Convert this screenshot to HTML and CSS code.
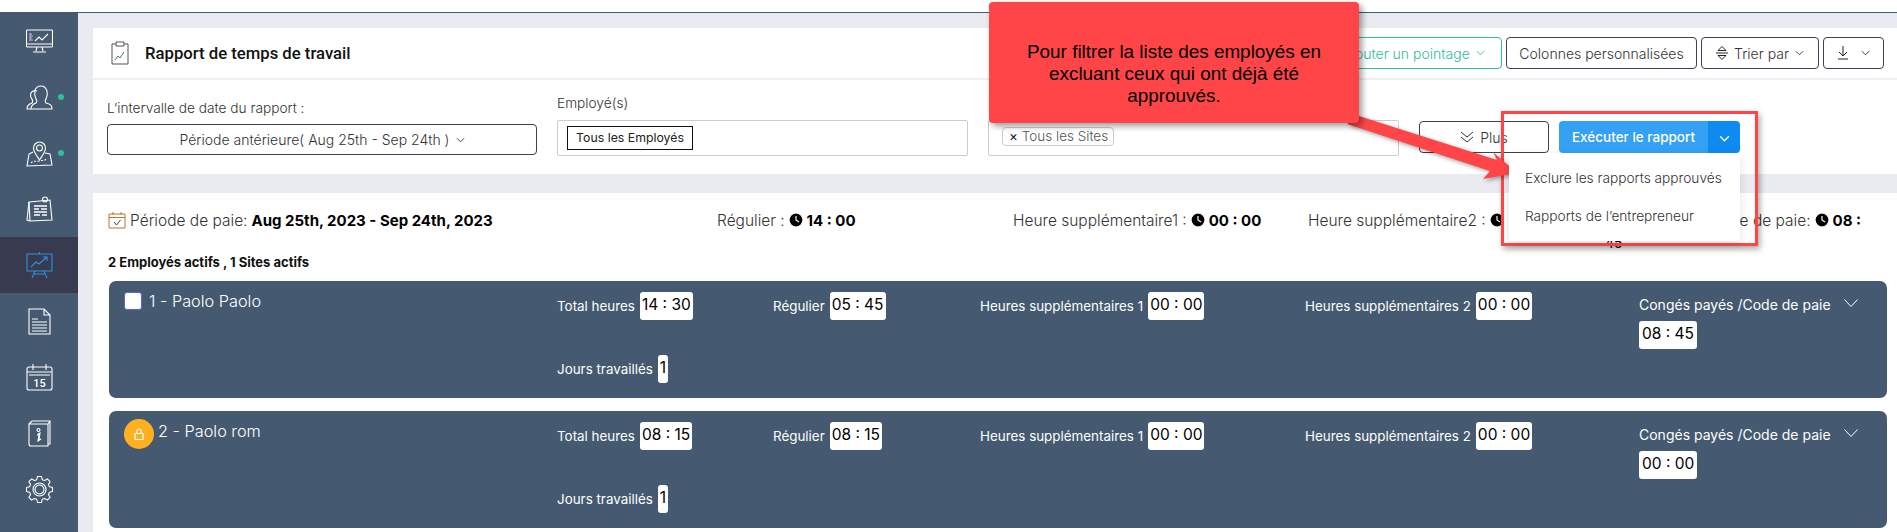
FILE: index.html
```html
<!doctype html>
<html lang="fr">
<head>
<meta charset="UTF-8">
<title>Rapport de temps de travail</title>
<link rel="stylesheet" href="styles.css">
</head>
<body>
<div class="app">
  <!--menu-->
  <nav class="sidebar">
    <a class="nav-item"><svg class="nav-icon" viewBox="0 0 27 27"><rect x="0.500" y="2" width="26" height="17" rx="1"/><path d="M0.500 16h26M11 19l-1 4M16 19l1 4M7 24h13"/><path d="M4 5v8M4 6h2M4 8h3M4 10h2M4 12h3" stroke="#c9a6e8"/><path d="M9 13l4-4 3 3 6-6"/></svg></a>
    <a class="nav-item"><svg class="nav-icon" viewBox="0 0 27 27"><path d="M9 25H1c0-4 2-5 5-6 1-1 1-2 0-4-1-1-2-3-1-6 1-2 4-3 6-2"/><path d="M9 25h17c0-4-2-5-6-6-1-1-1-3 0-4 1-2 2-4 1-8-1-3-3-5-6-5s-6 2-6 5c-1 4 0 6 1 8 1 1 1 3 0 4-3 1-5 2-5 6"/></svg><i class="nav-dot"></i></a>
    <a class="nav-item"><svg class="nav-icon" viewBox="0 0 27 27"><path d="M13.500 20c-3-5-6-8-6-12a6 6 0 0 1 12 0c0 4-3 7-6 12z"/><circle cx="13.500" cy="8" r="3"/><path d="M7 12l-4 2-2 12 25-1-2-11-5-1"/><path d="M5 23c2-3 5-1 8-2s6 0 7-2" stroke-dasharray="2 1.500"/></svg><i class="nav-dot"></i></a>
    <a class="nav-item"><svg class="nav-icon" viewBox="0 0 27 27"><path d="M3 6l21-2 2 20-22 1z"/><path d="M3 6L1 24l3 1"/><circle cx="19" cy="3.500" r="2.500"/><path d="M8 10h13M8 13h5M15 13h6M8 16h13M8 19h6M16 19h5" stroke-width="1.600"/></svg></a>
    <a class="nav-item active"><svg class="nav-icon" viewBox="0 0 27 27"><path d="M13.500 0v2M1 2h25v17H1zM9 19l-3 7M18 19l3 7M8 22h11"/><path d="M5 15l5-5 3 2 8-7M17 5h4v4"/></svg></a>
    <a class="nav-item"><svg class="nav-icon" viewBox="0 0 27 27"><path d="M3 1h15l6 6v19H3zM18 1v6h6"/><path d="M6 11h6M6 14h15M6 17h15M6 20h15M6 23h15"/></svg></a>
    <a class="nav-item"><svg class="nav-icon" viewBox="0 0 27 27"><rect x="1" y="3" width="25" height="23" rx="2"/><path d="M1 8h25M3 11h21M7 0v6M20 0v6"/><text x="13.500" y="23" text-anchor="middle" class="nav-date">15</text></svg></a>
    <a class="nav-item"><svg class="nav-icon" viewBox="0 0 27 27"><path d="M6 1h18v23h-2M3 4l3-3M3 4h19v22H5a2 2 0 0 1-2-2zM22 4l2-3"/><circle cx="12.500" cy="10" r="1.500"/><path d="M12 14l2-1-1 7 2-1-3 2 1-7-2 1"/></svg></a>
    <a class="nav-item"><svg class="nav-icon gear" viewBox="-13.500 -13.500 27 27">
      <defs><path id="tooth" d="M-3.830-9.240L-2.700-10-2-13H2L2.700-10 3.830-9.240"/></defs>
      <use href="#tooth"/><use href="#tooth" transform="rotate(45)"/><use href="#tooth" transform="rotate(90)"/><use href="#tooth" transform="rotate(135)"/><use href="#tooth" transform="rotate(180)"/><use href="#tooth" transform="rotate(225)"/><use href="#tooth" transform="rotate(270)"/><use href="#tooth" transform="rotate(315)"/>
      <circle r="6.500"/><circle r="4.500"/></svg></a>
  </nav>

  <main class="content">
    <!--filtres-->
    <section class="card report-card">
      <header class="report-head">
        <svg class="title-icon" viewBox="0 0 18 24"><path d="M5 3H1v20h16V3h-4"/><path d="M5 1h8v4H5z"/><path d="M4 19l3-4 2 2 4-6" stroke="#3a7f5f"/></svg>
        <h1 class="report-title">Rapport de temps de travail</h1>
        <div class="toolbar">
          <button class="btn btn-green">Ajouter un pointage <svg class="caret" viewBox="0 0 10 6"><path d="M1 1l4 4 4-4"/></svg></button>
          <button class="btn btn-columns">Colonnes personnalisées</button>
          <button class="btn btn-sort"><svg class="sort-icon" viewBox="0 0 12 14"><path d="M6 0.500l4 4H2zM2 9.500h8l-4 4z"/><path d="M0 7h12"/></svg> Trier par <svg class="caret" viewBox="0 0 10 6"><path d="M1 1l4 4 4-4"/></svg></button>
          <button class="btn btn-export"><svg class="sort-icon" viewBox="0 0 12 14"><path d="M6 0v10M2 6l4 4 4-4M1 13h10"/></svg> <svg class="caret" viewBox="0 0 10 6"><path d="M1 1l4 4 4-4"/></svg></button>
        </div>
      </header>
      <div class="filters">
        <div class="field field-date">
          <label class="field-label">L’intervalle de date du rapport :</label>
          <button class="btn btn-date">Période antérieure( Aug 25th - Sep 24th ) <svg class="caret" viewBox="0 0 10 6"><path d="M1 1l4 4 4-4"/></svg></button>
        </div>
        <div class="field">
          <label class="field-label">Employé(s)</label>
          <div class="select-box"><span class="chip-dark">Tous les Employés</span></div>
        </div>
        <div class="field">
          <label class="field-label">Site(s)</label>
          <div class="select-box"><span class="chip"><b class="chip-x">×</b> Tous les Sites</span></div>
        </div>
        <button class="btn btn-more"><svg class="more-icon" viewBox="0 0 14 12"><path d="M1 1l6 5 6-5M1 6l6 5 6-5"/></svg> Plus</button>
        <div class="run-group">
          <button class="btn-run">Exécuter le rapport</button>
          <button class="btn-run-caret"><svg class="caret" viewBox="0 0 10 6"><path d="M1 1l4 4 4-4"/></svg></button>
          <ul class="run-menu">
            <li>Exclure les rapports approuvés</li>
            <li>Rapports de l’entrepreneur</li>
          </ul>
        </div>
      </div>
    </section>

    <!--resultats-->
    <section class="card result-card">
      <div class="summary">
        <div class="sum-item"><svg class="cal-icon" viewBox="0 0 18 18"><path d="M1 3h16v14H1zM1 6.500h16M5 1v3M13 1v3" stroke="#b8792e"/><path d="M6 11l2.500 3 4-5"/></svg> Période de paie: <b>Aug 25th, 2023 - Sep 24th, 2023</b></div>
        <div class="sum-item">Régulier : <svg class="clock" viewBox="0 0 14 14"><circle cx="7" cy="7" r="7"/><path d="M7 3v4l3 2"/></svg> <b>14 : 00</b></div>
        <div class="sum-item">Heure supplémentaire1 : <svg class="clock" viewBox="0 0 14 14"><circle cx="7" cy="7" r="7"/><path d="M7 3v4l3 2"/></svg> <b>00 : 00</b></div>
        <div class="sum-item">Heure supplémentaire2 : <svg class="clock" viewBox="0 0 14 14"><circle cx="7" cy="7" r="7"/><path d="M7 3v4l3 2"/></svg></div>
        <div class="sum-item sum-last">ode de paie: <svg class="clock" viewBox="0 0 14 14"><circle cx="7" cy="7" r="7"/><path d="M7 3v4l3 2"/></svg> <b>08 :</b></div>
      </div>
      <div class="sum-wrap"><b>45</b></div>
      <p class="actives">2 Employés actifs , 1 Sites actifs</p>

      <div class="emp-row">
        <div class="emp-name"><span class="check"></span> 1 - Paolo Paolo</div>
        <div class="stat">Total heures <span class="val">14 : 30</span></div>
        <div class="stat">Régulier <span class="val">05 : 45</span></div>
        <div class="stat">Heures supplémentaires 1 <span class="val">00 : 00</span></div>
        <div class="stat">Heures supplémentaires 2 <span class="val">00 : 00</span></div>
        <div class="leave">
          <div class="leave-head">Congés payés /Code de paie <svg class="row-caret" viewBox="0 0 14 8"><path d="M0.500 0.500L7 7.500l6.500-7"/></svg></div>
          <span class="val">08 : 45</span>
        </div>
        <div class="stat stat-days">Jours travaillés <span class="val">1</span></div>
      </div>

      <div class="emp-row">
        <div class="emp-name"><span class="lock"><svg class="lock-icon" viewBox="0 0 10 12"><path d="M1 5.500h8v6H1zM3 5.500V3a2 2 0 0 1 4 0v2.500"/></svg></span> 2 - Paolo rom</div>
        <div class="stat">Total heures <span class="val">08 : 15</span></div>
        <div class="stat">Régulier <span class="val">08 : 15</span></div>
        <div class="stat">Heures supplémentaires 1 <span class="val">00 : 00</span></div>
        <div class="stat">Heures supplémentaires 2 <span class="val">00 : 00</span></div>
        <div class="leave">
          <div class="leave-head">Congés payés /Code de paie <svg class="row-caret" viewBox="0 0 14 8"><path d="M0.500 0.500L7 7.500l6.500-7"/></svg></div>
          <span class="val">00 : 00</span>
        </div>
        <div class="stat stat-days">Jours travaillés <span class="val">1</span></div>
      </div>
    </section>
  </main>
</div>

<!--annotations posees sur la capture-->
<div class="note-box"></div>
<svg class="note-arrow" viewBox="0 0 200 90"><polygon points="12,2 150,46 146,38 170,59 136,65 143,57 0,10"/></svg>
<div class="note">Pour filtrer la liste des employés en excluant ceux qui ont déjà été approuvés.</div>
</body>
</html>
```

FILE: styles.css
```css
*{
	box-sizing: border-box;
}
html, body{
	height:100%;
	overflow:hidden;
}
body{
	margin:0;
	background:#fff;
	position:relative;
	font-family:"Inter", "Liberation Sans", sans-serif;
	font-weight:300;
	color:#333;
}
button{
	font-family:inherit;
	font-weight:inherit;
	cursor:pointer;
}
.app{
	display:flex;
	height:532px;
	padding-top:12px;
}

/* menu */
.sidebar{
	width:78px;
	flex:none;
	background:#455a70;
	padding-top:1px;
}
.nav-item{
	display:flex;
	align-items:center;
	justify-content:center;
	height:56px;
	position:relative;
	color:#fff;
}
.nav-item.active{
	background:#383b4f;
	color:#2f8fe0;
}
.nav-icon{
	width:27px;
	height:27px;
	fill:none;
	stroke:currentColor;
	stroke-width:1.1;
}
.nav-date{
	font:500 11px "Roboto", sans-serif;
	fill:#fff;
	stroke:none;
}
.gear{
	stroke-linejoin:round;
}
.nav-dot{
	position:absolute;
	left:58px;
	top:25px;
	width:6px;
	height:6px;
	border-radius:50%;
	background:#2bbf9a;
}

/* contenu */
.content{
	flex:1;
	min-width:0;
	background:#e9ebf0;
	border-top:1px solid #455a70;
	padding:15px 0 0 15px;
	display:flex;
	flex-direction:column;
	gap:19px;
}
.card{
	background:#fff;
}
.report-card{
	height:146px;
	flex:none;
}
.report-head{
	height:52px;
	display:flex;
	align-items:center;
	padding:0 13px 0 18px;
	border-bottom:2px solid #eef0f4;
}
.title-icon{
	width:18px;
	height:24px;
	fill:none;
	stroke:#555;
	stroke-width:1;
	flex:none;
}
.report-title{
	margin:0 0 0 16px;
	font:500 16.700px "Roboto", sans-serif;
	color:#111;
}
.toolbar{
	margin-left:auto;
	display:flex;
	gap:4px;
}
.btn{
	height:32px;
	background:#fff;
	border:1px solid #3c4150;
	border-radius:4px;
	font-size:14px;
	color:#333;
	padding:0;
	display:flex;
	align-items:center;
	justify-content:center;
	gap:6px;
	white-space:nowrap;
}
.btn-green{
	width:177px;
	border-color:#2fc09c;
	color:#2fc09c;
}
.btn-columns{
	width:191px;
}
.btn-sort{
	width:118px;
}
.btn-export{
	width:61px;
	gap:12px;
}
.caret{
	width:9px;
	height:6px;
	fill:none;
	stroke:currentColor;
	stroke-width:1;
	flex:none;
}
.sort-icon{
	width:12px;
	height:14px;
	fill:none;
	stroke:#222;
	stroke-width:1;
}
.filters{
	display:flex;
	align-items:flex-start;
	padding:13px 0 0 14px;
}
.field{
	width:411px;
	margin-right:20px;
	flex:none;
}
.field-label{
	display:block;
	font-size:13.700px;
	line-height:20px;
	margin-bottom:7px;
	color:#333;
}
.field-date{
	width:430px;
	padding-top:5px;
}
.field-date .field-label{
	margin-bottom:6px;
}
.btn-date{
	width:100%;
	height:31px;
}
.select-box{
	height:36px;
	border:1px solid #ccc;
	border-radius:2px;
	padding:5px 9px;
	display:flex;
	align-items:flex-start;
}
.chip-dark{
	height:24px;
	width:126px;
	border:1.500px solid #111;
	font-size:12.300px;
	font-weight:400;
	line-height:21px;
	text-align:center;
	color:#222;
	white-space:nowrap;
}
.chip{
	height:19px;
	margin:1px 0 0 4px;
	padding:0 5px 0 6px;
	border:1px solid #ccc;
	border-radius:4px;
	font-size:13.500px;
	line-height:17px;
	color:#555;
}
.chip-x{
	font-weight:400;
	color:#222;
}
.btn-more{
	width:130px;
	margin-top:28px;
	flex:none;
}
.more-icon{
	width:14px;
	height:12px;
	fill:none;
	stroke:#333;
	stroke-width:1;
}
.run-group{
	display:flex;
	position:relative;
	width:181px;
	height:32px;
	margin:28px 0 0 10px;
	flex:none;
}
.btn-run, .btn-run-caret{
	border:0;
	color:#fff;
	padding:0;
	height:32px;
}
.btn-run{
	width:149px;
	background:#35a1f5;
	border-radius:4px 0 0 4px;
	font-size:13.500px;
	font-weight:500;
}
.btn-run-caret{
	width:32px;
	background:#0d8bf0;
	border-radius:0 4px 4px 0;
}
.btn-run-caret .caret{
	width:11px;
	height:7px;
	stroke-width:1.200;
}
.run-menu{
	position:absolute;
	top:32px;
	left:-50px;
	width:231px;
	height:88px;
	margin:0;
	padding:6px 0 0 16px;
	list-style:none;
	background:#fff;
	border-radius:4px;
	box-shadow:0 3px 10px rgba(0,0,0,.12);
	font-size:13.700px;
	font-weight:300;
	z-index:2;
}
.run-menu li{
	height:38px;
	line-height:38px;
	white-space:nowrap;
}

/* resultats */
.result-card{
	flex:1;
	padding:15px 10px 0 15px;
}
.summary{
	display:grid;
	grid-template-columns:609px 296px 295px 317px auto;
	height:24px;
	align-items:center;
	font-size:15.500px;
}
.sum-item{
	white-space:nowrap;
	display:flex;
	align-items:center;
	gap:4px;
	color:#333;
}
.sum-item b{
	font-size:15px;
	font-weight:700;
	color:#000;
}
.sum-last{
	justify-self:end;
	margin-right:26px;
	grid-column:5;
}
.cal-icon{
	width:18px;
	height:18px;
	fill:none;
	stroke:#444;
	stroke-width:1;
	margin-right:0;
}
.clock{
	width:14px;
	height:14px;
	fill:#000;
	stroke:#fff;
	stroke-width:1.200;
	flex:none;
}
.sum-wrap{
	height:22px;
	line-height:22px;
	font-size:14px;
	padding-left:1497px;
}
.sum-wrap b{
	color:#000;
}
.actives{
	margin:0 0 11px;
	height:16px;
	line-height:16px;
	font-size:13px;
	font-weight:700;
	color:#111;
}
.emp-row{
	height:117px;
	margin:0 0 13px 1px;
	padding:11px 0 0 15px;
	background:#455a70;
	border-radius:7px;
	color:#fff;
	display:grid;
	grid-template-columns:433px 216px 207px 325px 334px 1fr;
	grid-template-rows:28px 28px;
	row-gap:35px;
	font-size:13.400px;
	font-weight:400;
}
.emp-name{
	display:flex;
	align-items:flex-start;
	gap:7px;
	font-size:16.300px;
	font-weight:300;
	line-height:18px;
}
.check{
	width:18px;
	height:18px;
	background:#fff;
	border:1px solid #5a63d8;
	border-radius:3px;
	flex:none;
}
.lock{
	width:30px;
	height:30px;
	margin-top:-3px;
	margin-right:-3px;
	border-radius:50%;
	background:#ffb020;
	display:flex;
	align-items:center;
	justify-content:center;
	flex:none;
}
.lock-icon{
	width:10px;
	height:12px;
	fill:none;
	stroke:#fff;
	stroke-width:1.200;
}
.stat{
	display:flex;
	align-items:center;
	gap:5px;
	white-space:nowrap;
}
.val{
	display:inline-block;
	height:28px;
	padding:0 2px;
	background:#fff;
	border-radius:3px;
	color:#000;
	font:400 15.500px/26px "Inter", sans-serif;
}
.stat-days{
	grid-column:2;
	grid-row:2;
}
.leave{
	grid-column:6;
	grid-row:1 / span 2;
}
.leave-head{
	display:flex;
	align-items:center;
	height:24px;
	font-size:14px;
	white-space:nowrap;
	margin-bottom:5px;
}
.leave .val{
	padding:0 3px;
}
.row-caret{
	width:14px;
	height:8px;
	margin:-2px 29px 0 auto;
	fill:none;
	stroke:#fff;
	stroke-width:1;
}

/* annotations */
.note{
	position:absolute;
	left:989px;
	top:2px;
	width:370px;
	height:121px;
	padding:39px 20px 0;
	background:#ff4548;
	border-radius:4px;
	box-shadow:3px 3px 6px rgba(0,0,0,.4);
	font:400 18.900px/22px "Liberation Sans", sans-serif;
	color:#000;
	text-align:center;
}
.note-arrow{
	position:absolute;
	left:1347px;
	top:114px;
	width:200px;
	height:90px;
	fill:#ff4548;
	filter:drop-shadow(2px 2px 2px rgba(0,0,0,.35));
}
.note-box{
	position:absolute;
	left:1501px;
	top:111px;
	width:257px;
	height:135px;
	border:3px solid #ff4548;
	box-shadow:2px 3px 6px rgba(0,0,0,.35);
}
```
